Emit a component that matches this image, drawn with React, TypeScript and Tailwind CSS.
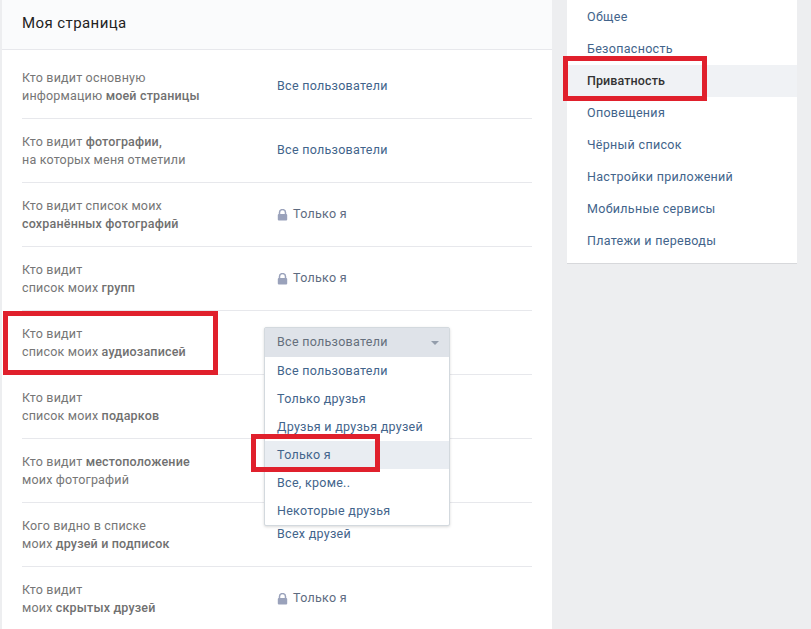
const rows: { lines: [React.ReactNode, React.ReactNode]; value: string; locked?: boolean }[] = [
  { lines: ["Кто видит основную", <>информацию <b>моей страницы</b></>], value: "Все пользователи" },
  { lines: [<>Кто видит <b>фотографии,</b></>, "на которых меня отметили"], value: "Все пользователи" },
  { lines: ["Кто видит список моих", <b>сохранённых фотографий</b>], value: "Только я", locked: true },
  { lines: ["Кто видит", <>список моих <b>групп</b></>], value: "Только я", locked: true },
  { lines: ["Кто видит", <>список моих <b>аудиозаписей</b></>], value: "" },
  { lines: ["Кто видит", <>список моих <b>подарков</b></>], value: "" },
  { lines: [<>Кто видит <b>местоположение</b></>, "моих фотографий"], value: "" },
  { lines: ["Кого видно в списке", <>моих <b>друзей и подписок</b></>], value: "Всех друзей" },
  { lines: ["Кто видит", <>моих <b>скрытых друзей</b></>], value: "Только я", locked: true },
];

const options = ["Все пользователи", "Только друзья", "Друзья и друзья друзей", "Только я", "Все, кроме..", "Некоторые друзья"];
const menu = ["Общее", "Безопасность", "Приватность", "Оповещения", "Чёрный список", "Настройки приложений", "Мобильные сервисы", "Платежи и переводы"];

function Lock() {
  return (
    <svg width="11" height="12" viewBox="0 0 11 12" className="mr-[5px] mt-px">
      <path d="M2.5 5V3.6a3 3 0 0 1 6 0V5" fill="none" stroke="#9aa2bb" strokeWidth="1.5" />
      <rect x="0.8" y="5" width="9.4" height="6.6" rx="1" fill="#9aa2bb" />
    </svg>
  );
}

function Dropdown() {
  return (
    <div className="absolute left-[264px] top-[327px] w-[186px] rounded-[2px] border border-[#d3d9de] bg-white tracking-[0.28px] shadow-[0_1px_3px_rgba(0,0,0,0.15)]">
      <div className="flex h-[29px] items-center justify-between bg-[#dfe3e9] pl-3 pr-[10px] text-[#656f7c]">
        <span>Все пользователи</span>
        <span className="h-0 w-0 border-x-[4px] border-t-[4px] border-x-transparent border-t-[#939dab]" />
      </div>
      {options.map((o) => (
        <div key={o} className={`flex h-[28px] items-center pl-3 text-[#42648b] ${o === "Только я" ? "bg-[#e9edf2]" : ""}`}>
          {o}
        </div>
      ))}
    </div>
  );
}

export default function App() {
  return (
    <div className="relative flex h-[629px] w-[811px] overflow-hidden bg-[#edeef0] pl-[2px] font-['Roboto',sans-serif] text-[12.5px] tracking-[0.18px]">
      <div className="w-[550px] shrink-0 bg-white">
        <div className="flex h-[50px] items-start border-b border-[#e7e8ec] bg-[#fafbfc] pl-[20px] pt-[12px] text-[15px] tracking-[0.42px] text-[#222]">
          Моя страница
        </div>
        <div className="mx-[20px] pt-[5px]">
          {rows.map((r, i) => (
            <div key={i} className="flex h-[64px] items-center border-b border-[#e7e8ec] last:border-b-transparent">
              <div className="w-[255px] leading-[18px] text-[#767676] [&_b]:font-medium [&_b]:text-[#707070]">
                <div>{r.lines[0]}</div>
                <div>{r.lines[1]}</div>
              </div>
              <div className={`flex items-center tracking-[0.28px] ${r.locked ? "text-[#5d6b80]" : "text-[#42648b]"}`}>
                {r.locked && <Lock />}
                {r.value}
              </div>
            </div>
          ))}
        </div>
      </div>

      <div className="ml-[15px] h-[263px] w-[230px] bg-white pt-[1px] tracking-[0.3px] shadow-[0_1px_0_#d7d8db]">
        {menu.map((m) => (
          <div
            key={m}
            className={`flex h-[32px] items-center pl-[20px] ${m === "Приватность" ? "bg-[#f0f2f5] font-medium tracking-[0.1px] text-[#333]" : "text-[#42648b]"}`}
          >
            {m}
          </div>
        ))}
      </div>

      <Dropdown />

      {/* красные рамки поверх скриншота */}
      <div className="absolute left-[3px] top-[311px] h-[64px] w-[215px] border-[5px] border-[#e0202c]" />
      <div className="absolute left-[251px] top-[434px] h-[38px] w-[129px] border-[5px] border-[#e0202c]" />
      <div className="absolute left-[563px] top-[56px] h-[45px] w-[144px] border-[5px] border-[#e0202c]" />
    </div>
  );
}
